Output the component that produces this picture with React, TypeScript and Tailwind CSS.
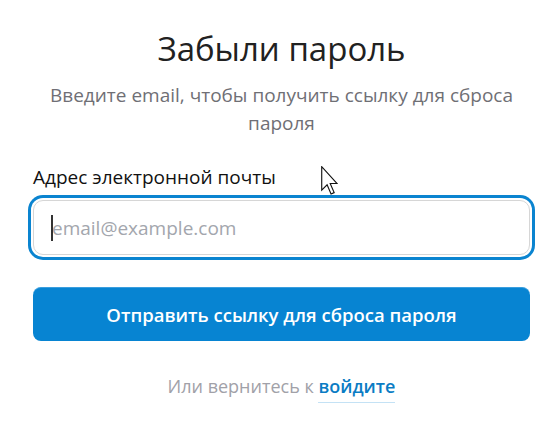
import React from 'react';

const font = { fontFamily: '"Open Sans", "Noto Sans", sans-serif' };

function Pointer() {
  return (
    <svg
      className="absolute left-[321px] top-[166px] pointer-events-none"
      width="17"
      height="29"
      viewBox="0 0 12 20.5"
    >
      <path
        d="M0.5 0.5 L0.5 17 L4.3 13.3 L7.1 19.8 L9.3 18.8 L6.5 12.4 L11.4 12.4 Z"
        fill="#ffffff"
        stroke="#111111"
        strokeWidth="0.8"
        strokeLinejoin="miter"
      />
    </svg>
  );
}

export default function App() {
  return (
    <div className="relative w-[556px] h-[426px] bg-white overflow-hidden" style={font}>
      <div className="ml-[33px] w-[497px] pt-[28px] flex flex-col">
        <h1 className="text-center text-[33px] leading-[42px] text-[#212121] font-normal">
          Забыли пароль
        </h1>
        <p className="mt-[11px] text-center text-[19px] leading-[28px] text-[#6f6f75] px-2">
          Введите email, чтобы получить ссылку для сброса пароля
        </p>

        <label className="mt-[26px] text-[19px] leading-[28px] font-medium text-[#111111]">
          Адрес электронной почты
        </label>

        <div className="relative mt-[9px]">
          <input
            type="email"
            readOnly
            placeholder="email@example.com"
            className="w-full h-[55px] rounded-[10px] border border-[#d6d6d6] bg-white pl-[18px] pr-4 text-[19px] text-[#222] placeholder:text-[#a3a6ad] outline-none ring-[3px] ring-[#0a84d0] ring-offset-2 ring-offset-white"
            style={font}
          />
          <span className="absolute left-[18px] top-[15px] h-[26px] w-[2px] bg-[#333]" />
        </div>

        <button
          type="button"
          className="mt-[32px] h-[54px] rounded-[8px] bg-[#0784d2] text-white text-[18.5px] font-semibold border-t border-[#3a9ede]"
          style={font}
        >
          Отправить ссылку для сброса пароля
        </button>

        <div className="mt-[32px] text-center text-[18px] leading-[26px] text-[#a1a1a8]">
          Или вернитесь к{' '}
          <a className="font-semibold text-[#0a7cc4] border-b border-[#c4e2f5] pb-[4px]">войдите</a>
        </div>
      </div>
      <Pointer />
    </div>
  );
}
